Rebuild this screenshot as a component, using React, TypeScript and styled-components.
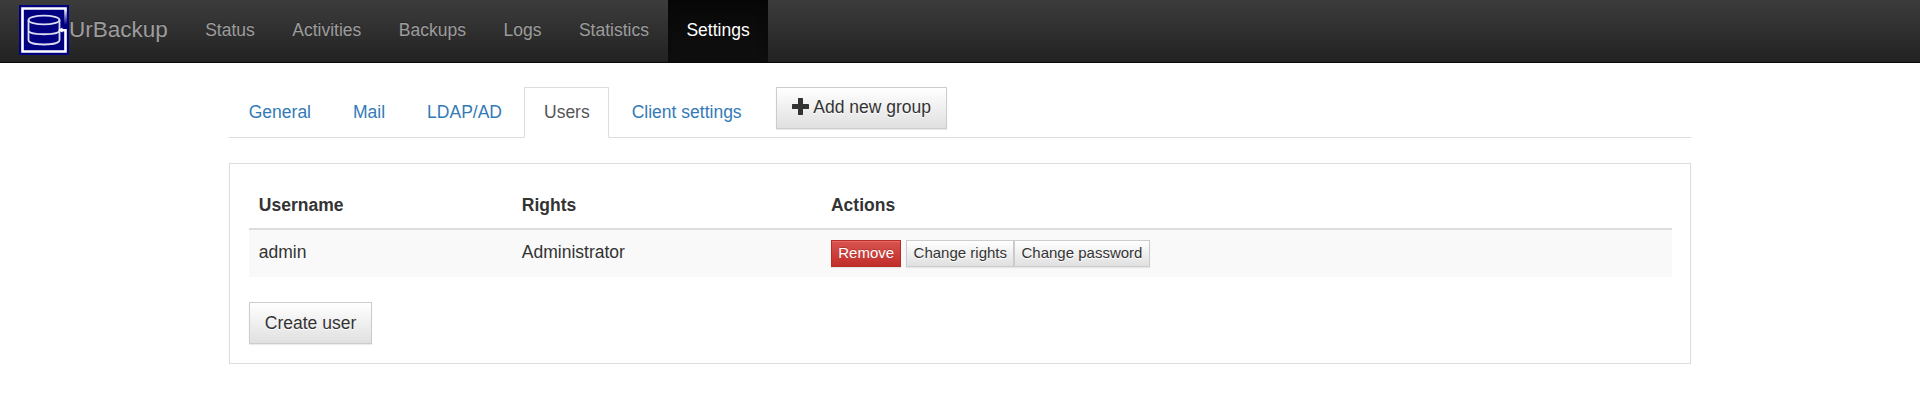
import React from "react";
import styled, { createGlobalStyle, css } from "styled-components";

const GlobalStyle = createGlobalStyle`
  *, *::before, *::after { box-sizing: border-box; }
  body {
    margin: 0;
    background: #fff;
    color: #333;
    font: 17.5px/25px Arial, "Liberation Sans", sans-serif;
  }
`;

const Navbar = styled.nav`
  display: flex;
  height: 63px;
  padding-left: 19px;
  border-bottom: 1px solid #090909;
  background: linear-gradient(to bottom, #3c3c3c 0%, #222 100%);
`;

const Brand = styled.a`
  display: flex;
  width: 167.4px;
  padding-top: 5px;
  color: #9d9d9d;
  font-size: 22.5px;
  line-height: 50px;
  text-shadow: 0 -1px 0 rgba(0, 0, 0, 0.25);
`;

const Logo = styled.svg`
  flex: none;
  width: 50px;
  height: 50px;
`;

const NavItem = styled.a<{ $active?: boolean }>`
  height: 62px;
  padding: 18px 18.75px 0;
  color: #9d9d9d;
  text-shadow: 0 -1px 0 rgba(0, 0, 0, 0.25);
  ${(p) =>
    p.$active &&
    css`
      color: #fff;
      background: linear-gradient(to bottom, #080808 0%, #0f0f0f 100%);
      box-shadow: inset 0 4px 11px rgba(0, 0, 0, 0.25);
    `}
`;

const Container = styled.main`
  width: 1462px;
  margin: 24px auto 0;
`;

const Tabs = styled.div`
  display: flex;
  height: 51px;
  border-bottom: 1px solid #ddd;
`;

const Tab = styled.a<{ $active?: boolean }>`
  height: 51px;
  margin-right: 2.5px;
  padding: 11.5px 18.75px 0;
  border: 1px solid transparent;
  color: #337ab7;
  ${(p) =>
    p.$active &&
    css`
      color: #555;
      background: #fff;
      border-color: #ddd #ddd transparent;
    `}
`;

const Button = styled.button<{ $small?: boolean; $danger?: boolean }>`
  display: inline-flex;
  align-items: center;
  justify-content: center;
  height: ${(p) => (p.$small ? 27 : 42)}px;
  padding: ${(p) => (p.$small ? "0 6.25px 1px" : "0 14.8px")};
  border: 1px solid #ccc;
  border-radius: 0;
  color: #333;
  background: linear-gradient(to bottom, #fff 0%, #e0e0e0 100%);
  font-family: inherit;
  font-size: ${(p) => (p.$small ? 15 : 17.5)}px;
  line-height: ${(p) => (p.$small ? 22 : 25)}px;
  white-space: nowrap;
  text-shadow: 0 1px 0 #fff;
  box-shadow: inset 0 1px 0 rgba(255, 255, 255, 0.15), 0 1px 1px rgba(0, 0, 0, 0.075);
  ${(p) =>
    p.$danger &&
    css`
      margin-right: 5px;
      border-color: #b92c28;
      color: #fff;
      background: linear-gradient(to bottom, #d9534f 0%, #c12e2a 100%);
      text-shadow: 0 -1px 0 rgba(0, 0, 0, 0.2);
    `}
`;

const AddButton = styled(Button)`
  width: 171px;
  margin-left: 12px;
  padding-bottom: 1px;
`;

const PlusIcon = styled.svg`
  width: 17px;
  height: 17px;
  margin: 0 4.5px 3px 0;
`;

const Panel = styled.section`
  height: 201px;
  margin-top: 25px;
  padding: 19px 18px 0 19px;
  border: 1px solid #ddd;
`;

const Row = styled.div<{ $head?: boolean }>`
  display: grid;
  grid-template-columns: 263px 309.2px 1fr;
  height: 47px;
  padding: 10px 0 0 9.8px;
  ${(p) =>
    p.$head
      ? css`
          border-bottom: 2px solid #ddd;
          font-weight: 700;
        `
      : css`
          background: #f9f9f9;
        `}
`;

const Cell = styled.div`
  line-height: 25px;
`;

const Actions = styled.div`
  display: flex;
`;

const Footer = styled.div`
  margin-top: 25px;
`;

const navItems = ["Status", "Activities", "Backups", "Logs", "Statistics", "Settings"];
const tabs = ["General", "Mail", "LDAP/AD", "Users", "Client settings"];

export default function App() {
  return (
    <>
      <GlobalStyle />
      <Navbar>
        <Brand>
          <Logo viewBox="0 0 50 50">
            <defs>
              <linearGradient id="edge" x1="0" y1="0" x2="0" y2="1">
                <stop offset="0" stopColor="#fff" />
                <stop offset="1" stopColor="#000080" />
              </linearGradient>
            </defs>
            <rect width="50" height="50" fill="#000080" />
            <path d="M47.8 3.5H3.5v43H46.5V25.2H40" fill="none" stroke="#fff" strokeWidth="2.6" />
            <rect x="45.2" y="4" width="2.6" height="16" fill="url(#edge)" />
            <g fill="none" stroke="#dcdcf2" strokeWidth="1.8">
              <ellipse cx="25" cy="15" rx="15.5" ry="4.4" />
              <path d="M9.5 15v20c0 6 31 6 31 0V15M9.5 25.5c0 5 31 5 31 0" />
            </g>
            <path d="M39 25l4.5-2.5v5z" fill="#fff" />
          </Logo>
          UrBackup
        </Brand>
        {navItems.map((item) => (
          <NavItem key={item} $active={item === "Settings"}>{item}</NavItem>
        ))}
      </Navbar>
      <Container>
        <Tabs>
          {tabs.map((tab) => (
            <Tab key={tab} $active={tab === "Users"}>{tab}</Tab>
          ))}
          <AddButton>
            <PlusIcon viewBox="0 0 17 17">
              <path d="M6.6 0h3.8q.6 0 .6.6V6h5.4q.6 0 .6.6v3.8q0 .6-.6.6H11v5.4q0 .6-.6.6H6.6q-.6 0-.6-.6V11H.6q-.6 0-.6-.6V6.6Q0 6 .6 6H6V.6Q6 0 6.6 0z" fill="#333" />
            </PlusIcon>
            Add new group
          </AddButton>
        </Tabs>
        <Panel>
          <Row $head>
            <Cell>Username</Cell>
            <Cell>Rights</Cell>
            <Cell>Actions</Cell>
          </Row>
          <Row>
            <Cell>admin</Cell>
            <Cell>Administrator</Cell>
            <Actions>
              <Button $small $danger>Remove</Button>
              <Button $small>Change rights</Button>
              <Button $small>Change password</Button>
            </Actions>
          </Row>
          <Footer>
            <Button>Create user</Button>
          </Footer>
        </Panel>
      </Container>
    </>
  );
}
